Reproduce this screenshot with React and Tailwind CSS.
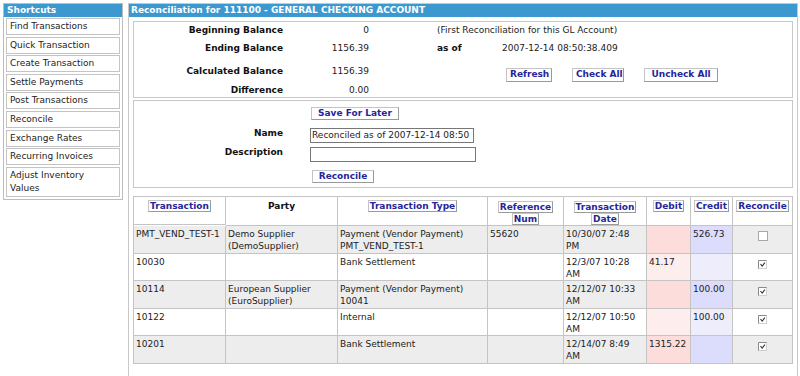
import React from 'react';

const shortcuts = [
  'Find Transactions',
  'Quick Transaction',
  'Create Transaction',
  'Settle Payments',
  'Post Transactions',
  'Reconcile',
  'Exchange Rates',
  'Recurring Invoices',
];

const rows = [
  { id: 'PMT_VEND_TEST-1', party: ['Demo Supplier', '(DemoSupplier)'], type: ['Payment (Vendor Payment)', 'PMT_VEND_TEST-1'], ref: '55620', date: ['10/30/07 2:48', 'PM'], debit: '', credit: '526.73', checked: false },
  { id: '10030', party: [], type: ['Bank Settlement'], ref: '', date: ['12/3/07 10:28', 'AM'], debit: '41.17', credit: '', checked: true },
  { id: '10114', party: ['European Supplier', '(EuroSupplier)'], type: ['Payment (Vendor Payment)', '10041'], ref: '', date: ['12/12/07 10:33', 'AM'], debit: '', credit: '100.00', checked: true },
  { id: '10122', party: [], type: ['Internal'], ref: '', date: ['12/12/07 10:50', 'AM'], debit: '', credit: '100.00', checked: true },
  { id: '10201', party: [], type: ['Bank Settlement'], ref: '', date: ['12/14/07 8:49', 'AM'], debit: '1315.22', credit: '', checked: true },
];

function Btn({ children, className = '' }) {
  return (
    <span className={`inline-block whitespace-nowrap border border-[#c4c4c4] border-r-[#9a9a9a] border-b-[#9a9a9a] bg-white px-[3px] leading-[11px] text-center font-bold text-[#262699] ${className}`}>
      {children}
    </span>
  );
}

function HeadLink({ children, className = '' }) {
  return (
    <span className={`border border-[#c4c4c4] border-r-[#9a9a9a] border-b-[#9a9a9a] bg-white px-[1px] font-bold text-[#262699] box-decoration-clone ${className}`}>
      {children}
    </span>
  );
}

function Lines({ lines }) {
  return lines.map((l, i) => (
    <React.Fragment key={i}>
      {i > 0 && <br />}
      {l}
    </React.Fragment>
  ));
}

function Checkbox({ checked }) {
  if (!checked) {
    return <span className="inline-block w-[10px] h-[10px] border border-[#a8a8a8] bg-white" />;
  }
  return (
    <svg width="9" height="9" viewBox="0 0 9 9" className="inline-block">
      <rect x="0.5" y="0.5" width="8" height="8" fill="#fff" stroke="#d0d0d0" />
      <path d="M0.5 8.5V0.5H8.5" fill="none" stroke="#8a8a8a" />
      <path d="M2.5 4L4.2 6.2L6.8 2.6" fill="none" stroke="#333" strokeWidth="1.1" />
    </svg>
  );
}

function Sidebar() {
  return (
    <div className="w-[120px] border border-[#bdbdbd] bg-white shrink-0">
      <div className="h-[13px] leading-[13px] bg-[#3b99cf] pl-[3px] font-bold text-white">Shortcuts</div>
      <div className="flex flex-col gap-[1.6px] px-[2px] pt-[1px] pb-[2px]">
        {shortcuts.map((s) => (
          <div key={s} className="border border-[#c4c4c4] pl-[3px] py-[1px] leading-[13px] text-[#222]">{s}</div>
        ))}
        <div className="border border-[#c4c4c4] pl-[3px] py-[1px] leading-[13px] text-[#222]">
          Adjust Inventory<br />Values
        </div>
      </div>
    </div>
  );
}

function BalanceBox() {
  return (
    <div className="border border-[#c8c8c8] text-[#222]">
      <div className="flex h-[18px] pt-[1px] leading-[14px]">
        <div className="w-[149px] text-right font-bold text-[#111]">Beginning Balance</div>
        <div className="w-[86px] text-right">0</div>
        <div className="w-[68px]" />
        <div>(First Reconciliation for this GL Account)</div>
      </div>
      <div className="flex h-[23px] pt-[1px] leading-[14px]">
        <div className="w-[149px] text-right font-bold text-[#111]">Ending Balance</div>
        <div className="w-[86px] text-right">1156.39</div>
        <div className="w-[68px]" />
        <div className="w-[65px] font-bold text-[#111]">as of</div>
        <div>2007-12-14 08:50:38.409</div>
      </div>
      <div className="flex h-[19px] pt-[1px] leading-[14px]">
        <div className="w-[149px] text-right font-bold text-[#111]">Calculated Balance</div>
        <div className="w-[86px] text-right">1156.39</div>
        <div className="w-[137px]" />
        <div className="flex gap-[20px] mt-[4px]">
          <Btn className="w-[46px]">Refresh</Btn>
          <Btn className="w-[52px]">Check All</Btn>
          <Btn className="w-[74px]">Uncheck All</Btn>
        </div>
      </div>
      <div className="flex h-[15px] pt-[1px] leading-[14px]">
        <div className="w-[149px] text-right font-bold text-[#111]">Difference</div>
        <div className="w-[86px] text-right">0.00</div>
      </div>
    </div>
  );
}

function SaveBox() {
  return (
    <div className="mt-[2px] border border-[#c8c8c8] pt-[6px] pb-[4px] text-[#222]">
      <div className="pl-[177px]">
        <Btn className="w-[88px]">Save For Later</Btn>
      </div>
      <div className="flex items-start mt-[7px]">
        <div className="w-[149px] text-right font-bold text-[#111] leading-[10px]">Name</div>
        <input
          readOnly
          defaultValue="Reconciled as of 2007-12-14 08:50"
          className="ml-[27px] w-[164px] h-[15px] border border-[#777] px-[1px] text-[9px] leading-[13px] text-[#222] outline-none"
        />
      </div>
      <div className="flex items-start mt-[4px]">
        <div className="w-[149px] text-right font-bold text-[#111] leading-[10px]">Description</div>
        <input
          readOnly
          defaultValue=""
          className="ml-[27px] w-[166px] h-[15px] border border-[#777] px-[1px] text-[9px] outline-none"
        />
      </div>
      <div className="pl-[178px] mt-[8px]">
        <Btn className="w-[62px]">Reconcile</Btn>
      </div>
    </div>
  );
}

function TxTable() {
  const cell = 'border-r border-b border-[#c4c4c4]';
  const head = `${cell} text-center pt-[3px] leading-[12px]`;
  return (
    <div className="mt-[8px] grid grid-cols-[92px_112px_150px_76px_83px_44px_42px_60px] border-l border-t border-[#c4c4c4] text-[#222]">
      <div className={`${head} h-[28px]`}><HeadLink>Transaction</HeadLink></div>
      <div className={`${head} font-bold text-[#111]`}>Party</div>
      <div className={head}><HeadLink>Transaction Type</HeadLink></div>
      <div className={`${head} leading-[11px] pt-[4px]`}><HeadLink>Reference<br />Num</HeadLink></div>
      <div className={`${head} leading-[11px] pt-[4px]`}><HeadLink>Transaction<br />Date</HeadLink></div>
      <div className={head}><HeadLink>Debit</HeadLink></div>
      <div className={head}><HeadLink>Credit</HeadLink></div>
      <div className={head}><HeadLink>Reconcile</HeadLink></div>
      {rows.map((r, i) => {
        const gray = i % 2 === 0;
        const bg = gray ? 'bg-[#ededed]' : 'bg-white';
        const h = gray ? 'h-[28px]' : 'h-[27px]';
        const td = `${cell} ${bg} ${h} pl-[2px] pt-[2px] leading-[12px] whitespace-nowrap overflow-hidden`;
        return (
          <React.Fragment key={r.id}>
            <div className={td}>{r.id}</div>
            <div className={td}><Lines lines={r.party} /></div>
            <div className={td}><Lines lines={r.type} /></div>
            <div className={td}>{r.ref}</div>
            <div className={td}><Lines lines={r.date} /></div>
            <div className={`${cell} ${h} ${gray ? 'bg-[#fddcdc]' : 'bg-[#fdeded]'} pl-[2px] pt-[2px] leading-[12px]`}>{r.debit}</div>
            <div className={`${cell} ${h} ${gray ? 'bg-[#dcdcfc]' : 'bg-[#ededfc]'} pl-[2px] pt-[2px] leading-[12px]`}>{r.credit}</div>
            <div className={`${cell} ${h} ${bg} text-center pt-[5px] leading-[10px]`}><Checkbox checked={r.checked} /></div>
          </React.Fragment>
        );
      })}
    </div>
  );
}

export default function App() {
  return (
    <div className="w-[800px] h-[376px] overflow-hidden bg-white flex items-start pt-[3px] pl-[3px] font-['DejaVu_Sans',sans-serif] text-[9px]">
      <Sidebar />
      <div className="ml-[5px] w-[670px] border border-[#c8c8c8] pb-[40px] shrink-0">
        <div className="h-[13px] leading-[13px] bg-[#3b99cf] pl-[2px] font-bold text-white">
          Reconciliation for 111100 - GENERAL CHECKING ACCOUNT
        </div>
        <div className="px-[4px] pt-[4px]">
          <BalanceBox />
          <SaveBox />
          <TxTable />
        </div>
      </div>
    </div>
  );
}
